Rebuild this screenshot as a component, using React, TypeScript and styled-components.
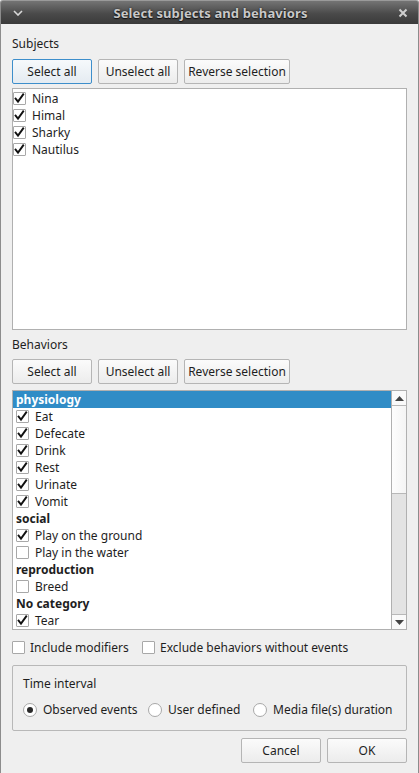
import React from "react";
import styled, { createGlobalStyle } from "styled-components";

const Global = createGlobalStyle`
  html, body { margin: 0; padding: 0; background: #efefef; overflow: hidden; }
  * { box-sizing: border-box; }
  body { font-family: "Noto Sans", "Open Sans", sans-serif; font-size: 12px; color: #1e1e1e; }
`;

const Window = styled.div`
  width: 419px;
  height: 773px;
  display: flex;
  flex-direction: column;
  background: #efefef;
  border-left: 1px solid #8c8c8c;
  border-right: 1px solid #8c8c8c;
  border-radius: 3px 3px 0 0;
  overflow: hidden;
`;

const TitleBar = styled.div`
  height: 24px;
  flex: none;
  display: flex;
  align-items: center;
  justify-content: space-between;
  padding: 0 8px 0 10px;
  background: linear-gradient(#747474, #4a4a4a 55%, #3a3a3a);
  border-top: 1px solid #9a9a9a;
`;

const TitleText = styled.div`
  flex: 1;
  text-align: center;
  font-weight: bold;
  font-size: 13px;
  color: #c8c8c8;
  text-shadow: 0 1px 1px #111, 0 0 2px #222;
  letter-spacing: 0.1px;
`;

const TitleIcon = styled.div`
  width: 14px;
  height: 14px;
  display: flex;
  align-items: center;
  justify-content: center;
`;

const Content = styled.div`
  flex: 1;
  display: flex;
  flex-direction: column;
  padding: 11px 11px 0 11px;
`;

const Label = styled.div<{ $mt?: number }>`
  height: 17px;
  line-height: 17px;
  margin-top: ${(p) => p.$mt ?? 0}px;
`;

const ButtonRow = styled.div<{ $mt?: number; $justify?: string }>`
  display: flex;
  gap: 6px;
  margin-top: ${(p) => p.$mt ?? 0}px;
  justify-content: ${(p) => p.$justify ?? "flex-start"};
`;

const Button = styled.button<{ $w: number; $focus?: boolean }>`
  width: ${(p) => p.$w}px;
  height: 25px;
  padding: 0;
  font-family: inherit;
  font-size: 12px;
  color: #1e1e1e;
  border-radius: 2px;
  border: 1px solid ${(p) => (p.$focus ? "#3d8ecb" : "#b5b5b5")};
  background: ${(p) =>
    p.$focus
      ? "linear-gradient(#f6f9fc, #e4ebf1)"
      : "linear-gradient(#fbfbfb, #ececec)"};
`;

const ListBox = styled.div<{ $h: number; $mt: number }>`
  height: ${(p) => p.$h}px;
  margin-top: ${(p) => p.$mt}px;
  width: 395px;
  background: #fff;
  border: 1px solid #b0b0b0;
  display: flex;
`;

const Items = styled.div<{ $pt?: number }>`
  flex: 1;
  display: flex;
  flex-direction: column;
  overflow: hidden;
  padding-top: ${(p) => p.$pt ?? 0}px;
`;

const Row = styled.div<{ $indent?: number; $selected?: boolean; $bold?: boolean }>`
  height: 17px;
  flex: none;
  display: flex;
  align-items: center;
  gap: 6px;
  padding-left: ${(p) => p.$indent ?? 0}px;
  font-weight: ${(p) => (p.$bold ? "bold" : "normal")};
  background: ${(p) => (p.$selected ? "#308cc6" : "transparent")};
  color: ${(p) => (p.$selected ? "#fff" : "#1e1e1e")};
`;

const Box = styled.span`
  width: 13px;
  height: 13px;
  flex: none;
  background: #fff;
  border: 1px solid #a8a8a8;
  border-radius: 1px;
  display: flex;
  align-items: center;
  justify-content: center;
`;

const Check = ({ checked }: { checked: boolean }) => (
  <Box>
    {checked && (
      <svg width="11" height="11" viewBox="0 0 11 11">
        <path d="M1.6 5.6 L4 8.6 L9.2 1.4" fill="none" stroke="#111" strokeWidth="1.9" strokeLinecap="square" strokeLinejoin="miter" />
      </svg>
    )}
  </Box>
);

const Scrollbar = styled.div`
  width: 15px;
  flex: none;
  display: flex;
  flex-direction: column;
  border-left: 1px solid #b0b0b0;
  background: #e3e3e3;
`;

const ScrollBtn = styled.div`
  height: 14px;
  flex: none;
  background: #fafafa;
  display: flex;
  align-items: center;
  justify-content: center;
`;

const Thumb = styled.div`
  height: 89px;
  flex: none;
  background: linear-gradient(90deg, #fdfdfd, #f4f4f4);
  border-top: 1px solid #b8b8b8;
  border-bottom: 1px solid #b8b8b8;
`;

const Track = styled.div`
  flex: 1;
  border-bottom: 1px solid #b8b8b8;
`;

const OptionRow = styled.div`
  display: flex;
  align-items: center;
  margin-top: 9px;
  height: 17px;
`;

const OptionItem = styled.label<{ $w?: number }>`
  display: flex;
  align-items: center;
  gap: 5px;
  width: ${(p) => (p.$w ? `${p.$w}px` : "auto")};
`;

const Group = styled.div`
  margin-top: 9px;
  width: 395px;
  height: 66px;
  border: 1px solid #b8b8b8;
  border-radius: 2px;
  padding: 9px 0 0 10px;
  display: flex;
  flex-direction: column;
`;

const RadioRow = styled.div`
  display: flex;
  align-items: center;
  margin-top: 9px;
  height: 17px;
`;

const RadioCircle = styled.span<{ $on?: boolean }>`
  width: 14px;
  height: 14px;
  border-radius: 50%;
  border: 1px solid #a8a8a8;
  background: #fff;
  display: flex;
  align-items: center;
  justify-content: center;
  flex: none;
  &::after {
    content: "";
    width: 6px;
    height: 6px;
    border-radius: 50%;
    background: ${(p) => (p.$on ? "#2a2a2a" : "transparent")};
  }
`;

const RadioItem = styled.label<{ $w: number }>`
  display: flex;
  align-items: center;
  gap: 6px;
  width: ${(p) => p.$w}px;
`;

const subjects = ["Nina", "Himal", "Sharky", "Nautilus"];

type B = { kind: "cat"; name: string; selected?: boolean } | { kind: "item"; name: string; checked: boolean };
const behaviors: B[] = [
  { kind: "cat", name: "physiology", selected: true },
  { kind: "item", name: "Eat", checked: true },
  { kind: "item", name: "Defecate", checked: true },
  { kind: "item", name: "Drink", checked: true },
  { kind: "item", name: "Rest", checked: true },
  { kind: "item", name: "Urinate", checked: true },
  { kind: "item", name: "Vomit", checked: true },
  { kind: "cat", name: "social" },
  { kind: "item", name: "Play on the ground", checked: true },
  { kind: "item", name: "Play in the water", checked: false },
  { kind: "cat", name: "reproduction" },
  { kind: "item", name: "Breed", checked: false },
  { kind: "cat", name: "No category" },
  { kind: "item", name: "Tear", checked: true },
];

export default function App() {
  return (
    <>
      <Global />
      <Window>
        <TitleBar>
          <TitleIcon>
            <svg width="10" height="6" viewBox="0 0 10 6">
              <path d="M1 1 L5 5 L9 1" fill="none" stroke="#d8d8d8" strokeWidth="1.6" />
            </svg>
          </TitleIcon>
          <TitleText>Select subjects and behaviors</TitleText>
          <TitleIcon>
            <svg width="10" height="10" viewBox="0 0 10 10">
              <path d="M1.5 1.5 L8.5 8.5 M8.5 1.5 L1.5 8.5" fill="none" stroke="#cfcfcf" strokeWidth="2" />
            </svg>
          </TitleIcon>
        </TitleBar>
        <Content>
          <Label>Subjects</Label>
          <ButtonRow $mt={7}>
            <Button $w={80} $focus>Select all</Button>
            <Button $w={80}>Unselect all</Button>
            <Button $w={106}>Reverse selection</Button>
          </ButtonRow>
          <ListBox $h={242} $mt={4}>
            <Items $pt={1}>
              {subjects.map((s) => (
                <Row key={s}>
                  <Check checked />
                  {s}
                </Row>
              ))}
            </Items>
          </ListBox>
          <Label $mt={6}>Behaviors</Label>
          <ButtonRow $mt={6}>
            <Button $w={80}>Select all</Button>
            <Button $w={80}>Unselect all</Button>
            <Button $w={106}>Reverse selection</Button>
          </ButtonRow>
          <ListBox $h={240} $mt={6}>
            <Items>
              {behaviors.map((b) =>
                b.kind === "cat" ? (
                  <Row key={b.name} $bold $selected={b.selected} $indent={3}>
                    {b.name}
                  </Row>
                ) : (
                  <Row key={b.name} $indent={3}>
                    <Check checked={b.checked} />
                    {b.name}
                  </Row>
                )
              )}
            </Items>
            <Scrollbar>
              <ScrollBtn>
                <svg width="9" height="5" viewBox="0 0 9 5"><path d="M0 5 L4.5 0 L9 5 Z" fill="#444" /></svg>
              </ScrollBtn>
              <Thumb />
              <Track />
              <ScrollBtn>
                <svg width="9" height="5" viewBox="0 0 9 5"><path d="M0 0 L4.5 5 L9 0 Z" fill="#444" /></svg>
              </ScrollBtn>
            </Scrollbar>
          </ListBox>
          <OptionRow>
            <OptionItem $w={130}>
              <Check checked={false} />
              Include modifiers
            </OptionItem>
            <OptionItem>
              <Check checked={false} />
              Exclude behaviors without events
            </OptionItem>
          </OptionRow>
          <Group>
            <Label>Time interval</Label>
            <RadioRow>
              <RadioItem $w={125}>
                <RadioCircle $on />
                Observed events
              </RadioItem>
              <RadioItem $w={105}>
                <RadioCircle />
                User defined
              </RadioItem>
              <RadioItem $w={150}>
                <RadioCircle />
                Media file(s) duration
              </RadioItem>
            </RadioRow>
          </Group>
          <ButtonRow $mt={7} $justify="flex-end">
            <Button $w={80}>Cancel</Button>
            <Button $w={80}>OK</Button>
          </ButtonRow>
        </Content>
      </Window>
    </>
  );
}
